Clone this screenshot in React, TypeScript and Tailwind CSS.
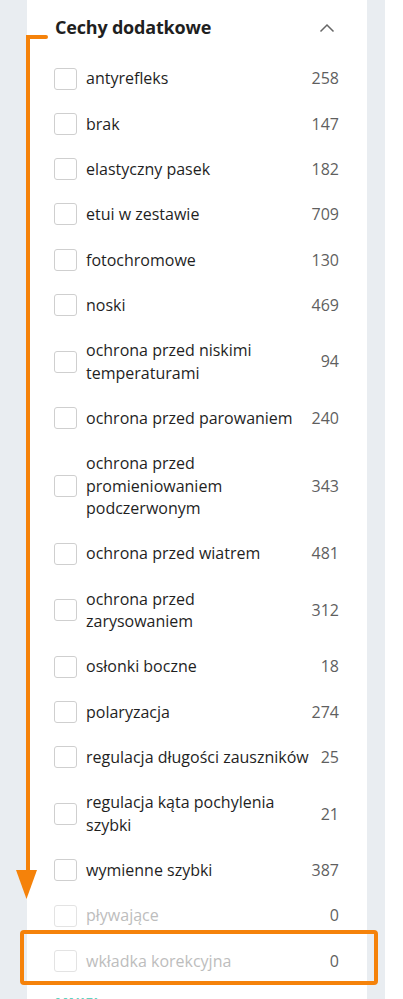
import React from "react";

type Item = { label: string; count: number; disabled?: boolean };

const items: Item[] = [
  { label: "antyrefleks", count: 258 },
  { label: "brak", count: 147 },
  { label: "elastyczny pasek", count: 182 },
  { label: "etui w zestawie", count: 709 },
  { label: "fotochromowe", count: 130 },
  { label: "noski", count: 469 },
  { label: "ochrona przed niskimi temperaturami", count: 94 },
  { label: "ochrona przed parowaniem", count: 240 },
  { label: "ochrona przed promieniowaniem podczerwonym", count: 343 },
  { label: "ochrona przed wiatrem", count: 481 },
  { label: "ochrona przed zarysowaniem", count: 312 },
  { label: "osłonki boczne", count: 18 },
  { label: "polaryzacja", count: 274 },
  { label: "regulacja długości zauszników", count: 25 },
  { label: "regulacja kąta pochylenia szybki", count: 21 },
  { label: "wymienne szybki", count: 387 },
  { label: "pływające", count: 0, disabled: true },
  { label: "wkładka korekcyjna", count: 0, disabled: true },
];

function Row({ item }: { item: Item }) {
  return (
    <li className="flex items-center gap-[9px] py-[11.4px]">
      <span
        className={
          "h-[22px] w-[23px] shrink-0 rounded-[3px] border bg-white " +
          (item.disabled ? "border-[#e3e3e3]" : "border-[#cfcfcf]")
        }
      />
      <span
        className={
          "flex-1 text-[16px] leading-[22.5px] " +
          (item.disabled ? "text-[#bdbdbd]" : "text-[#1f1f1f]")
        }
      >
        {item.label}
      </span>
      <span className="shrink-0 text-[16px] leading-[22.5px] text-[#5f5f5f]">
        {item.count}
      </span>
    </li>
  );
}

export default function App() {
  return (
    <main
      className="relative h-[999px] w-[403px] overflow-hidden bg-white"
      style={{ fontFamily: '"Open Sans", "Noto Sans", sans-serif' }}
    >
      <div className="flex h-full">
        <div className="w-[27px] shrink-0 bg-[#e9edf1]" />
        <section className="w-[340px] shrink-0 bg-white pl-[27px] pr-[28px]">
          <header className="flex h-[56px] items-center justify-between pb-[1px] pl-[1px] pr-[4px]">
            <h2 className="text-[18px] font-bold tracking-[-0.2px] text-[#1f1f1f]">
              Cechy dodatkowe
            </h2>
            <svg width="16" height="10" viewBox="0 0 16 10" fill="none">
              <path d="M1.5 8.5L8 2l6.5 6.5" stroke="#666" strokeWidth="1.5" />
            </svg>
          </header>
          <ul>
            {items.map((it) => (
              <Row key={it.label} item={it} />
            ))}
          </ul>
          <div className="pt-[8px] pl-[1px] text-[14px] font-bold tracking-wide text-[#5fd3c0]">
            MNIEJ
          </div>
        </section>
        <div className="w-[18px] shrink-0 bg-[#e9edf1]" />
        <div className="flex-1 bg-white" />
      </div>

      {/* annotation overlay */}
      <div className="pointer-events-none absolute left-[26px] top-[35px] h-[4px] w-[22px] rounded-r-full bg-[#f5820a]" />
      <div className="pointer-events-none absolute left-[26px] top-[35px] h-[840px] w-[4px] bg-[#f5820a]" />
      <svg
        className="pointer-events-none absolute left-[16px] top-[870px]"
        width="21"
        height="29"
        viewBox="0 0 21 29"
      >
        <path d="M0 0H21L10.5 29Z" fill="#f5820a" />
      </svg>
      <div className="pointer-events-none absolute left-[20px] top-[930px] h-[55px] w-[358px] rounded-[4px] border-[4px] border-[#f5820a]" />
    </main>
  );
}
